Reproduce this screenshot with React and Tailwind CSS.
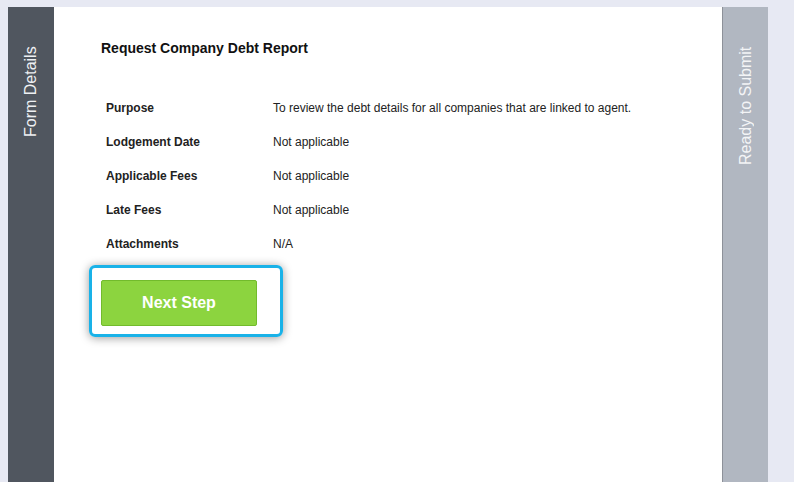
import React from 'react';

const rows = [
  ['Purpose', 'To review the debt details for all companies that are linked to agent.'],
  ['Lodgement Date', 'Not applicable'],
  ['Applicable Fees', 'Not applicable'],
  ['Late Fees', 'Not applicable'],
  ['Attachments', 'N/A'],
];

export default function App() {
  return (
    <div
      className="h-[482px] w-[794px] bg-[#e7e9f3] pt-[7px] pl-[8px] flex overflow-hidden"
      style={{ fontFamily: '"Liberation Sans", Arial, sans-serif' }}
    >
      {/* Left tab */}
      <div className="w-[46px] h-full bg-[#50565f] flex justify-center pt-[37px] shrink-0">
        <span className="[writing-mode:vertical-rl] rotate-180 text-[16px] text-[#eef0f3] leading-none h-[93px] whitespace-nowrap">
          Form Details
        </span>
      </div>

      {/* Main content */}
      <div className="w-[668px] h-full bg-white shrink-0 pl-[47px] pt-[33px]">
        <h2 className="text-[14px] font-bold text-[#111] leading-[16px]">Request Company Debt Report</h2>

        <div className="mt-[35px] pl-[5px]">
          {rows.map(([label, value]) => (
            <div key={label} className="flex items-center h-[34px] text-[12px] leading-[14px]">
              <div className="w-[167px] font-bold text-[#222]">{label}</div>
              <div className="text-[#222]">{value}</div>
            </div>
          ))}
        </div>

        <div className="-ml-[12px] mt-[4px] w-[194px] h-[72px] rounded-[6px] border-[3px] border-[#19b2e8] shadow-[0_1px_10px_rgba(0,0,0,0.4)] pl-[9px] pt-[12px]">
          <button className="w-[156px] h-[46px] bg-[#8cd43f] border border-[#72bb2c] rounded-[2px] text-white text-[16px] font-bold">
            Next Step
          </button>
        </div>
      </div>

      {/* Right tab */}
      <div className="w-[46px] h-full bg-[#b1b7c1] border-l border-l-[#8d9199] flex justify-center pt-[37px] shrink-0">
        <span className="[writing-mode:vertical-rl] rotate-180 text-[16px] text-[#f3f4f6] leading-none h-[121px] whitespace-nowrap">
          Ready to Submit
        </span>
      </div>
    </div>
  );
}
